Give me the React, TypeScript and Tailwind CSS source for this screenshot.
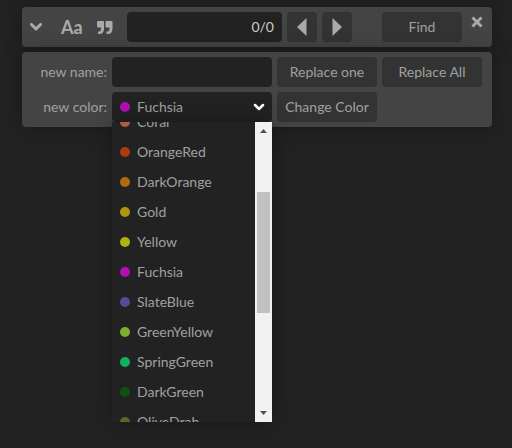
import { useLayoutEffect, useRef, useState } from "react";
import type { ReactNode } from "react";

const colors = [
  { name: "Coral", dot: "bg-[#b05c40]" },
  { name: "OrangeRed", dot: "bg-[#b03a10]" },
  { name: "DarkOrange", dot: "bg-[#b06a10]" },
  { name: "Gold", dot: "bg-[#b09610]" },
  { name: "Yellow", dot: "bg-[#b0b010]" },
  { name: "Fuchsia", dot: "bg-[#b010b0]" },
  { name: "SlateBlue", dot: "bg-[#544a96]" },
  { name: "GreenYellow", dot: "bg-[#7cb02a]" },
  { name: "SpringGreen", dot: "bg-[#10b060]" },
  { name: "DarkGreen", dot: "bg-[#105010]" },
  { name: "OliveDrab", dot: "bg-[#546a20]" },
];

const panel = "rounded bg-[#444] shadow-[0_0_20px_rgba(0,0,0,0.3)]";

function Button({ children, label, className = "" }: { children: ReactNode; label?: string; className?: string }) {
  return (
    <button
      type="button"
      aria-label={label}
      className={`flex h-[30px] shrink-0 items-center justify-center rounded bg-[#333] whitespace-nowrap ${className}`}
    >
      {children}
    </button>
  );
}

function ColorList({ selected, onPick }: { selected: string; onPick: (name: string) => void }) {
  const list = useRef<HTMLUListElement>(null);
  useLayoutEffect(() => {
    if (list.current) list.current.scrollTop = 15;
  }, []);
  return (
    <div className="absolute inset-x-0 top-full z-10 flex h-[300px] bg-[#222] shadow-[0_0_20px_rgba(0,0,0,0.3)]">
      <ul ref={list} role="listbox" aria-label="Colors" className="min-w-0 flex-1 overflow-hidden">
        {colors.map((c) => (
          <li
            key={c.name}
            role="option"
            aria-selected={c.name === selected}
            onClick={() => onPick(c.name)}
            className="flex h-[30px] items-center gap-[7px] pl-2"
          >
            <span className={`size-[10px] rounded-full ${c.dot}`} />
            {c.name}
          </li>
        ))}
      </ul>
      <div className="flex w-[17px] flex-col items-center justify-between bg-[#f1f1f1]" aria-hidden="true">
        <svg viewBox="0 0 17 17" className="size-[17px]" fill="#505050">
          <path d="M5 11h7L8.500 7z" />
        </svg>
        <div className="flex w-[13px] flex-1 flex-col pt-[53px]">
          <div className="h-[121px] bg-[#c1c1c1]" />
        </div>
        <svg viewBox="0 0 17 17" className="size-[17px]" fill="#505050">
          <path d="M5 6h7L8.500 10z" />
        </svg>
      </div>
    </div>
  );
}

export default function App() {
  const [color, setColor] = useState("Fuchsia");
  const current = colors.find((c) => c.name === color) ?? colors[0];
  return (
    <main className="flex min-h-screen flex-col gap-[5px] bg-[#222] pt-[7px] pr-5 pl-[22px] font-['Lato',sans-serif] text-sm text-[#a0a0a0]">
      <section className={`flex items-start gap-[5px] p-[5px] ${panel}`}>
        <div className="flex h-[30px] w-[95px] shrink-0 items-center">
          <button type="button" aria-label="Toggle replace" className="flex w-[34px] pl-[3px]">
            <svg viewBox="0 0 12 8" className="h-2 w-3" fill="none" stroke="#aaa" strokeWidth="3" strokeLinecap="round" strokeLinejoin="round">
              <path d="M1.500 1.500L6 6l4.500-4.500" />
            </svg>
          </button>
          <button type="button" aria-label="Match case" className="flex w-9">
            <span className="text-lg leading-5 font-bold text-[#aaa]">Aa</span>
          </button>
          <button type="button" aria-label="Whole word" className="flex">
            <svg viewBox="0 0 16 13" className="h-[13px] w-4" fill="#aaa">
              <path d="M1 0h5q1 0 1 1v6.500q0 5.500-5 5.500h-.5q-.5 0-.5-.5v-1.500q0-.5.5-.5H2q2 0 2-2.500V6.500H1q-1 0-1-1V1q0-1 1-1z" />
              <path d="M9.500 0h5q1 0 1 1v6.500q0 5.500-5 5.500h-.5q-.5 0-.5-.5v-1.500q0-.5.5-.5h.5q2 0 2-2.500V6.500h-3q-1 0-1-1V1q0-1 1-1z" />
            </svg>
          </button>
        </div>
        <div className="flex h-[30px] min-w-0 flex-1 items-center rounded bg-[#222] px-2 text-[#ccc]">
          <input type="text" aria-label="Find" className="min-w-0 flex-1 bg-transparent outline-none" />
          <span>0/0</span>
        </div>
        <Button label="Previous" className="w-[30px]">
          <svg viewBox="0 0 10 20" className="h-5 w-[10px]" fill="#aaa">
            <path d="M9.500 1v18L0 10z" />
          </svg>
        </Button>
        <Button label="Next" className="w-[30px]">
          <svg viewBox="0 0 10 20" className="h-5 w-[10px]" fill="#aaa">
            <path d="M.5 1v18L10 10z" />
          </svg>
        </Button>
        <Button className="ml-[25px] w-20">Find</Button>
        <button type="button" aria-label="Close" className="flex h-5 w-5 shrink-0 items-center justify-center">
          <svg viewBox="0 0 12 12" className="size-3" fill="none" stroke="#aaa" strokeWidth="3">
            <path d="M1.500 1.500l9 9M10.500 1.500l-9 9" />
          </svg>
        </button>
      </section>

      <section className={`grid grid-cols-[80px_1fr_100px_100px] items-center gap-[5px] py-[5px] pr-[10px] pl-[5px] ${panel}`}>
        <label htmlFor="new-name" className="text-right">new name:</label>
        <input id="new-name" type="text" className="h-[30px] w-full min-w-0 rounded bg-[#222] px-2 outline-none" />
        <Button>Replace one</Button>
        <Button>Replace All</Button>

        <label htmlFor="new-color" className="text-right">new color:</label>
        <div className="relative">
          <select
            id="new-color"
            value={color}
            onChange={(e) => setColor(e.target.value)}
            className="block h-[30px] w-full appearance-none rounded bg-[#222] pl-[25px] outline-none"
          >
            {colors.map((c) => (
              <option key={c.name}>{c.name}</option>
            ))}
          </select>
          <div className="pointer-events-none absolute inset-0 flex items-center justify-between pr-[7px] pl-2">
            <span className={`size-[10px] rounded-full ${current.dot}`} />
            <svg viewBox="0 0 12 8" className="h-2 w-3" fill="none" stroke="#fff" strokeWidth="2.500" strokeLinecap="round" strokeLinejoin="round">
              <path d="M2 2l4 4 4-4" />
            </svg>
          </div>
          <ColorList selected={color} onPick={setColor} />
        </div>
        <Button>Change Color</Button>
      </section>
    </main>
  );
}
